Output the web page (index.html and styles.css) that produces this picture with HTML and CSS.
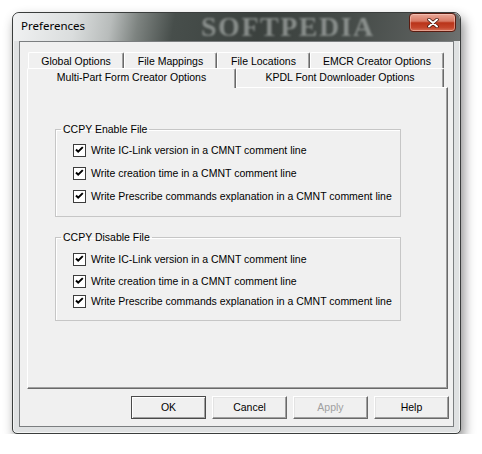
FILE: index.html
```html
<!DOCTYPE HTML>
<html lang="en-US">
<head>
	<meta charset="UTF-8">
	<title>Preferences</title>
	<link rel="stylesheet" href="styles.css">
</head>
<body>
	<div class="window">
		<div class="titlebar">
			<span class="title">Preferences</span>
			<span class="watermark">SOFTPEDIA</span>
			<button class="close" type="button">
				<svg width="12" height="10" viewBox="0 0 12 10"><path d="M2 1.5l8 7M10 1.5l-8 7" stroke="#3a1008" stroke-width="3.4" stroke-linecap="round"/><path d="M2 1.5l8 7M10 1.5l-8 7" stroke="#fff" stroke-width="2" stroke-linecap="round"/></svg>
			</button>
		</div>
		<div class="frame">
			<div class="client">
				<div class="tab-row back">
					<div class="tab tab-global">Global Options</div>
					<div class="tab tab-mappings">File Mappings</div>
					<div class="tab tab-locations">File Locations</div>
					<div class="tab tab-emcr">EMCR Creator Options</div>
				</div>
				<div class="tab-row front">
					<div class="tab tab-multipart selected">Multi-Part Form Creator Options</div>
					<div class="tab tab-kpdl">KPDL Font Downloader Options</div>
				</div>
				<div class="panel">
					<fieldset class="group group-enable">
						<legend>CCPY Enable File</legend>
						<label class="check"><svg width="13" height="13" viewBox="0 0 13 13"><rect x=".5" y=".5" width="12" height="12" fill="#fff" stroke="#3c3c3c"/><path d="M3 5.5l2.2 2.2 4.6-4.6" fill="none" stroke="#000" stroke-width="2"/></svg>Write IC-Link version in a CMNT comment line</label>
						<label class="check"><svg width="13" height="13" viewBox="0 0 13 13"><rect x=".5" y=".5" width="12" height="12" fill="#fff" stroke="#3c3c3c"/><path d="M3 5.5l2.2 2.2 4.6-4.6" fill="none" stroke="#000" stroke-width="2"/></svg>Write creation time in a CMNT comment line</label>
						<label class="check"><svg width="13" height="13" viewBox="0 0 13 13"><rect x=".5" y=".5" width="12" height="12" fill="#fff" stroke="#3c3c3c"/><path d="M3 5.5l2.2 2.2 4.6-4.6" fill="none" stroke="#000" stroke-width="2"/></svg>Write Prescribe commands explanation in a CMNT comment line</label>
					</fieldset>
					<fieldset class="group group-disable">
						<legend>CCPY Disable File</legend>
						<label class="check"><svg width="13" height="13" viewBox="0 0 13 13"><rect x=".5" y=".5" width="12" height="12" fill="#fff" stroke="#3c3c3c"/><path d="M3 5.5l2.2 2.2 4.6-4.6" fill="none" stroke="#000" stroke-width="2"/></svg>Write IC-Link version in a CMNT comment line</label>
						<label class="check"><svg width="13" height="13" viewBox="0 0 13 13"><rect x=".5" y=".5" width="12" height="12" fill="#fff" stroke="#3c3c3c"/><path d="M3 5.5l2.2 2.2 4.6-4.6" fill="none" stroke="#000" stroke-width="2"/></svg>Write creation time in a CMNT comment line</label>
						<label class="check"><svg width="13" height="13" viewBox="0 0 13 13"><rect x=".5" y=".5" width="12" height="12" fill="#fff" stroke="#3c3c3c"/><path d="M3 5.5l2.2 2.2 4.6-4.6" fill="none" stroke="#000" stroke-width="2"/></svg>Write Prescribe commands explanation in a CMNT comment line</label>
					</fieldset>
				</div>
				<div class="buttons">
					<button class="btn default" type="button">OK</button>
					<button class="btn" type="button">Cancel</button>
					<button class="btn disabled" type="button">Apply</button>
					<button class="btn" type="button">Help</button>
				</div>
			</div>
		</div>
	</div>
</body>
</html>
```

FILE: styles.css
```css
body, html {
	margin: 0;
	padding: 0;
	background: #fff;
	font: 10.5px/13px "Liberation Sans", Arial, sans-serif;
	color: #000;
}

.window {
	box-sizing: border-box;
	width: 449px;
	height: 422px;
	margin: 12px 0 0 12px;
	border: 1px solid #3a3d3c;
	border-radius: 7px 7px 5px 5px;
	background: #dfe1e2;
	box-shadow: 3px 6px 12px rgba(0, 0, 0, .45), inset 0 0 0 1px #f4f5f5;
	display: flex;
	flex-direction: column;
	overflow: hidden;
}

/* glass title bar */
.titlebar {
	flex: none;
	height: 28px;
	display: flex;
	align-items: flex-start;
	padding: 0 4px 0 8px;
	border-radius: 6px 6px 0 0;
	background: linear-gradient(100deg, #f1f2f3 0%, #dadddd 14%, #b8bcbb 22%, #7d8380 28%, #474e4b 36%, #3b413e 55%, #454b48 75%, #5a5e5c 92%, #6e7170 100%);
}

.title {
	margin-top: 5px;
	font: 11.5px/16px "Noto Sans", sans-serif;
	color: #000;
}

.watermark {
	margin: 1px 0 0 116px;
	font: bold 28px/26px "Liberation Serif", serif;
	letter-spacing: 1.5px;
	color: rgba(160, 166, 163, .75);
	filter: blur(1px);
}

.close {
	margin-left: auto;
	width: 47px;
	height: 19px;
	padding: 0;
	border: 1px solid #5a1b10;
	border-radius: 4px;
	background: linear-gradient(#e9a898 0%, #d87a65 42%, #b93419 52%, #c4452b 80%, #d5735a 100%);
	box-shadow: inset 0 0 0 1px rgba(255, 220, 210, .45);
	display: flex;
	align-items: center;
	justify-content: center;
}

/* frame around client area */
.frame {
	flex: 1;
	display: flex;
	padding: 0 6px 6px;
}

.client {
	flex: 1;
	display: flex;
	flex-direction: column;
	border: 1px solid #7b7e80;
	background: #f0f0f0;
	padding: 10px 0 0 7px;
}

/* tabs */
.tab-row {
	display: flex;
}

.tab-row.back {
	margin-left: 1px;
}

.tab {
	box-sizing: border-box;
	text-align: center;
	white-space: nowrap;
	background: #f0f0f0;
	border-top: 1px solid #fff;
	border-left: 1px solid #fff;
	border-right: 1px solid #696969;
	border-radius: 2px 2px 0 0;
	box-shadow: inset -1px 0 #a0a0a0;
	padding-top: 2px;
}

.back .tab {
	height: 16px;
}

.front .tab {
	height: 19px;
	position: relative;
}

.tab-global { width: 96px; }
.tab-mappings { width: 93px; }
.tab-locations { width: 93px; }
.tab-emcr { width: 134px; }
.tab-multipart { width: 209px; }
.tab-kpdl { width: 208px; }

.tab.selected {
	height: 20px;
	margin-bottom: -1px;
	z-index: 1;
}

.panel {
	box-sizing: border-box;
	width: 421px;
	height: 302px;
	border: 1px solid;
	border-color: #fff #696969 #696969 #fff;
	box-shadow: inset -1px -1px #a0a0a0;
	padding: 34px 0 0 27px;
	display: flex;
	flex-direction: column;
	align-items: flex-start;
}

/* group boxes */
.group {
	box-sizing: border-box;
	width: 346px;
	margin: 0;
	padding: 8px 0 13px 17px;
	border: 1px solid #c6c6c6;
	box-shadow: inset 1px 1px #fff;
	display: flex;
	flex-direction: column;
	gap: 10px;
}

.group legend {
	margin-left: -12px;
	padding: 0 2px;
	line-height: 14px;
}

.group-disable {
	margin-top: 13px;
	padding: 9px 0 12px 17px;
	gap: 9px;
}

.group-disable .check:last-child {
	margin-top: -2px;
}

.check {
	display: flex;
	align-items: center;
	gap: 5px;
	height: 13px;
	white-space: nowrap;
}

.check svg {
	flex: none;
}

/* dialog buttons */
.buttons {
	display: flex;
	justify-content: flex-end;
	gap: 6px;
	margin: 7px 4px 0 0;
}

.btn {
	box-sizing: border-box;
	width: 75px;
	height: 23px;
	padding: 0;
	font: 10.5px/13px "Liberation Sans", Arial, sans-serif;
	color: #000;
	background: #f0f0f0;
	border: 1px solid;
	border-color: #fff #696969 #696969 #fff;
	box-shadow: inset -1px -1px #a0a0a0, inset 1px 1px #e3e3e3;
}

.btn.default {
	border-color: #4a4a4a;
	box-shadow: inset 1px 1px #fff, inset -1px -1px #a0a0a0;
}

.btn.disabled {
	color: #a0a0a0;
}
```
